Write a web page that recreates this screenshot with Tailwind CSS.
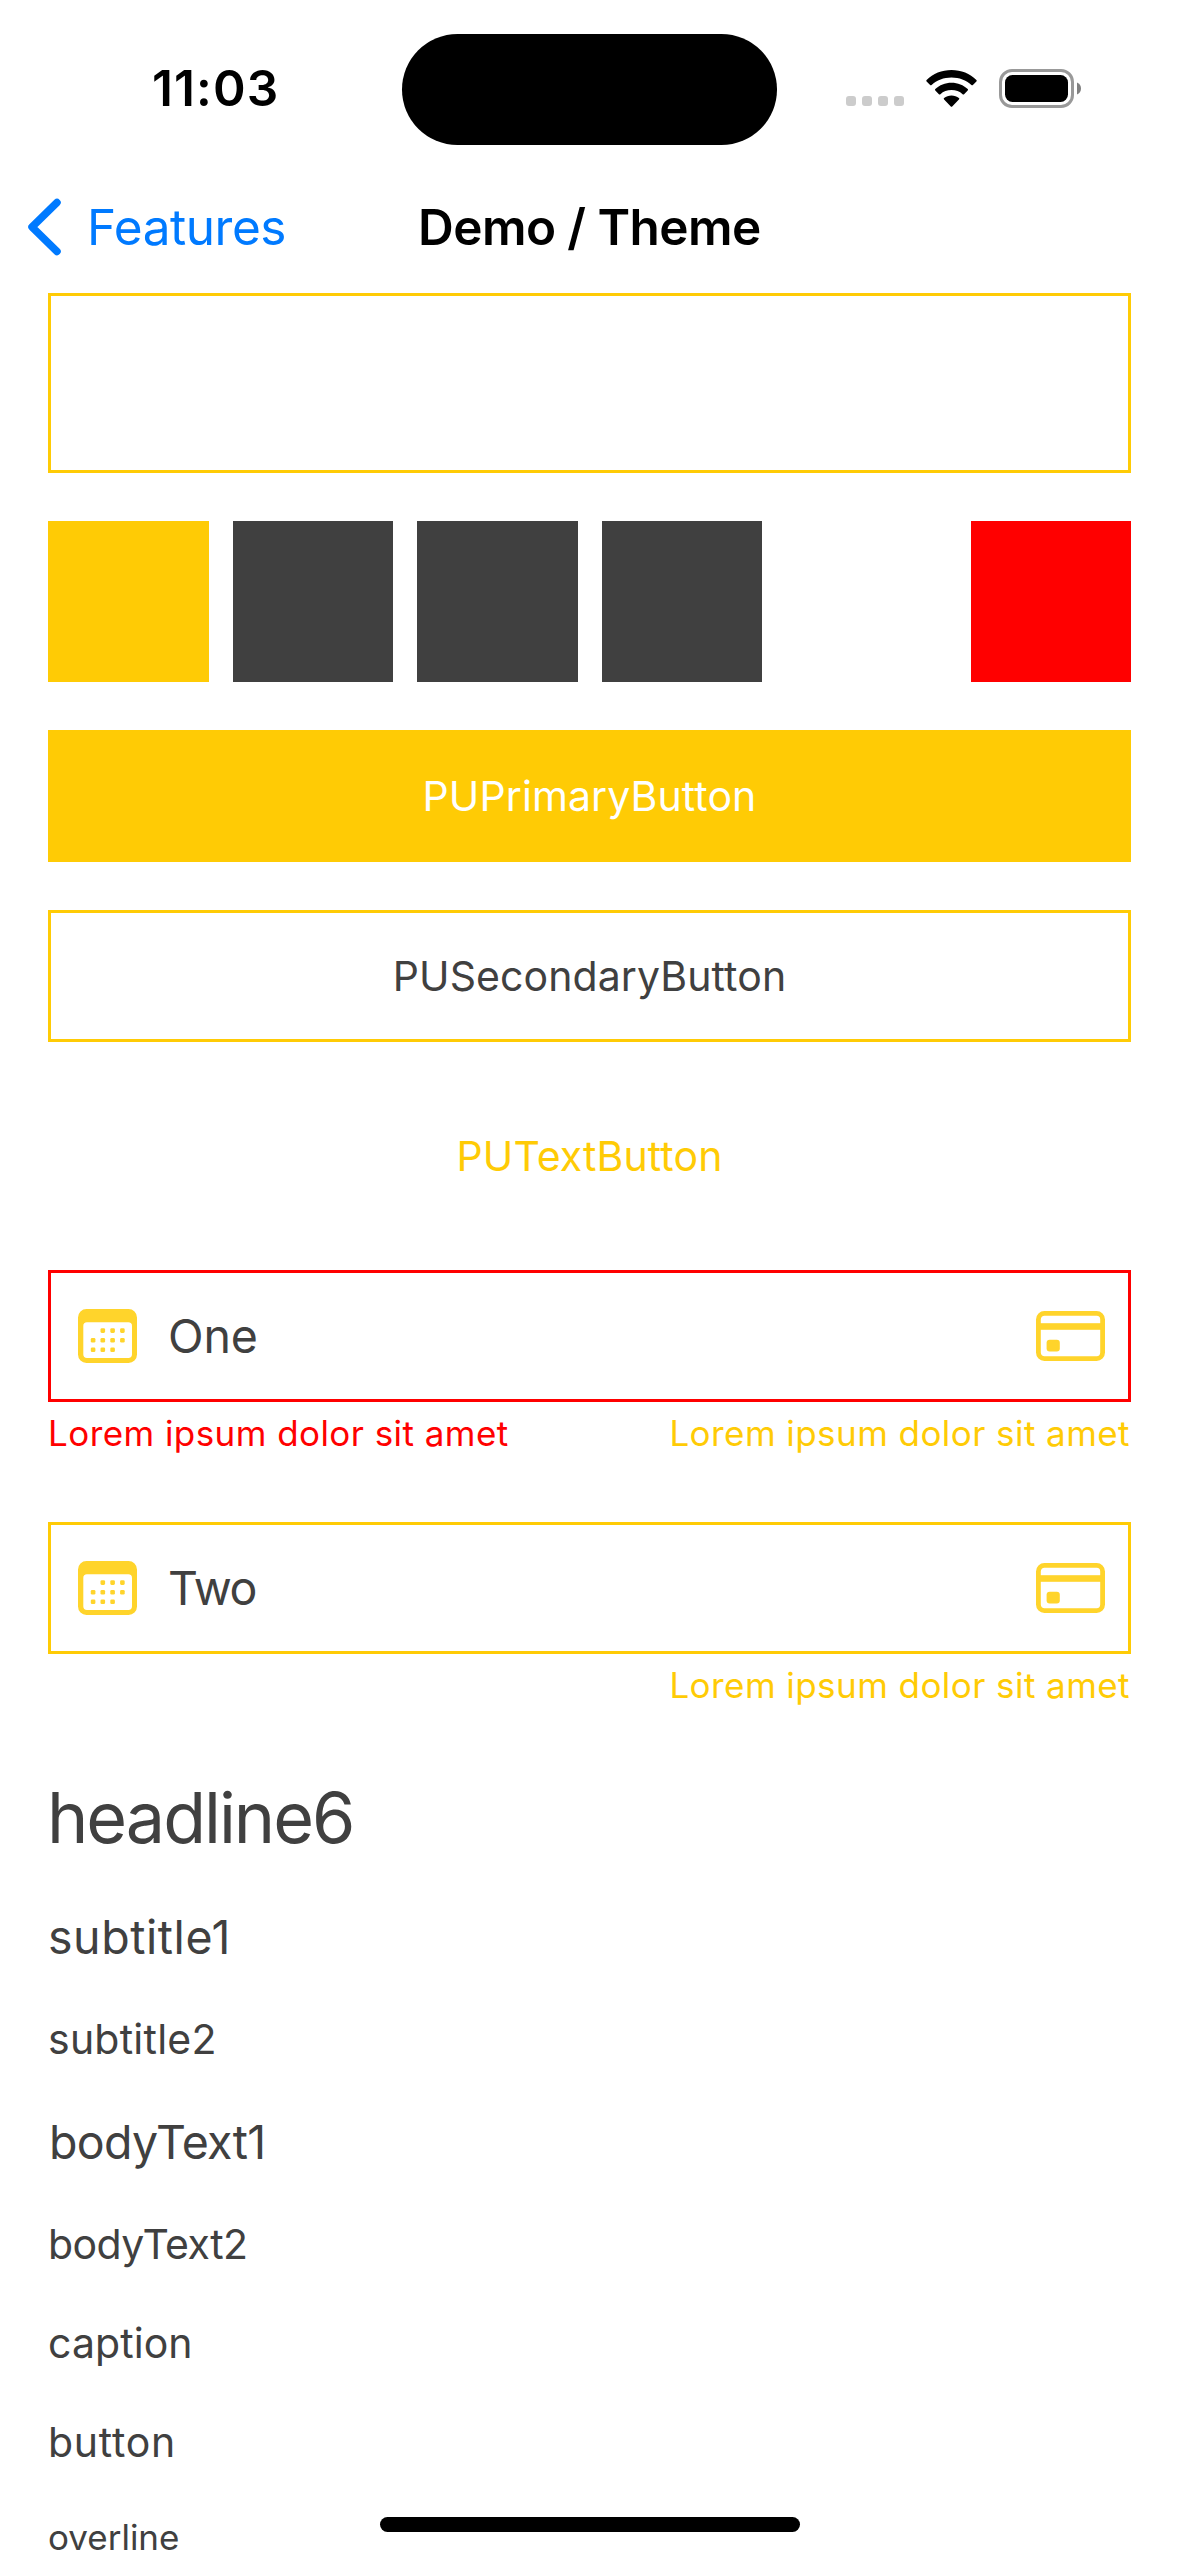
<!DOCTYPE html>
<html lang="en">
<head>
<meta charset="utf-8">
<title>Demo / Theme</title>
<script src="https://cdn.jsdelivr.net/npm/@tailwindcss/browser@4"></script>
</head>
<body class="relative h-[2556px] w-[1179px] overflow-hidden bg-white font-[Inter,sans-serif] text-[#404040]">

  <svg class="hidden">
    <symbol id="calendar" viewBox="0 0 59 54">
      <path fill-rule="evenodd" d="M8.500 0H50.500a8.500 8.500 0 0 1 8.500 8.500V45.500a8.500 8.500 0 0 1 -8.500 8.500H8.500a8.500 8.500 0 0 1 -8.500 -8.500V8.500a8.500 8.500 0 0 1 8.500 -8.500ZM9 13.300a3.700 3.700 0 0 0 -3.700 3.700V45.200a3.700 3.700 0 0 0 3.700 3.700H50.300a3.700 3.700 0 0 0 3.700 -3.700V17a3.700 3.700 0 0 0 -3.700 -3.700Z"/>
      <g>
        <rect x="22.500" y="19.300" width="4.600" height="4.600" rx="1.300"/><rect x="32.300" y="19.300" width="4.600" height="4.600" rx="1.300"/><rect x="42.100" y="19.300" width="4.600" height="4.600" rx="1.300"/>
        <rect x="12.800" y="29" width="4.600" height="4.600" rx="1.300"/><rect x="22.500" y="29" width="4.600" height="4.600" rx="1.300"/><rect x="32.300" y="29" width="4.600" height="4.600" rx="1.300"/><rect x="42.100" y="29" width="4.600" height="4.600" rx="1.300"/>
        <rect x="12.800" y="38.500" width="4.600" height="4.600" rx="1.300"/><rect x="22.500" y="38.500" width="4.600" height="4.600" rx="1.300"/><rect x="32.300" y="38.500" width="4.600" height="4.600" rx="1.300"/>
      </g>
    </symbol>
    <symbol id="card" viewBox="0 0 69 50">
      <rect x="2.400" y="2.400" width="64.200" height="45.200" rx="6" fill="none" stroke="currentColor" stroke-width="4.800"/>
      <rect x="2" y="12.200" width="65" height="6.600"/>
      <rect x="10.600" y="28.700" width="13.200" height="11.800" rx="3"/>
    </symbol>
  </svg>

  <!-- Status bar -->
  <header class="flex h-[176px] items-center">
    <div class="w-[402px] pl-[152px] text-[49.5px] leading-[60px] font-semibold tracking-[1.1px] text-black">11:03</div>
    <div class="mt-[2px] h-[111px] w-[375px] rounded-full bg-black"></div>
    <div class="ml-[69px] flex items-center">
      <div class="mt-[26px] flex gap-[6px]">
        <i class="size-[10px] rounded-[3px] bg-[#cccccc]"></i><i class="size-[10px] rounded-[3px] bg-[#cccccc]"></i><i class="size-[10px] rounded-[3px] bg-[#cccccc]"></i><i class="size-[10px] rounded-[3px] bg-[#cccccc]"></i>
      </div>
      <svg class="ml-[22px] h-[37px] w-[51px]" viewBox="0 0 51 37" fill="#000">
        <path d="M25.500 0C35.200 0 44 3.700 50.400 9.900C50.900 10.400 50.900 11 50.400 11.500L46.900 15C46.500 15.400 45.900 15.400 45.400 15C40.200 10.200 33.200 7.500 25.500 7.500S10.800 10.200 5.600 15C5.100 15.400 4.500 15.400 4.100 15L.6 11.500C.1 11 .1 10.400.6 9.900C7 3.700 15.800 0 25.500 0Z"/>
        <path d="M25.500 12.700C31.800 12.700 37.500 15.100 41.700 19C42.200 19.500 42.200 20.100 41.700 20.600L38.100 24.200C37.700 24.600 37.100 24.600 36.600 24.200C33.700 21.600 29.800 20.100 25.500 20.100S17.300 21.600 14.400 24.200C13.900 24.600 13.300 24.600 12.900 24.200L9.300 20.600C8.800 20.100 8.800 19.500 9.300 19C13.500 15.100 19.200 12.700 25.500 12.700Z"/>
        <path d="M25.500 25.400C28.300 25.400 30.900 26.400 32.900 28.100C33.400 28.500 33.400 29.100 32.900 29.600L26.200 36.400C25.800 36.800 25.200 36.800 24.800 36.400L18.100 29.600C17.600 29.100 17.600 28.500 18.100 28.100C20.100 26.400 22.700 25.400 25.500 25.400Z"/>
      </svg>
      <svg class="ml-[22px] h-[39px] w-[82px]" viewBox="0 0 82 39">
        <rect x="1.500" y="1.500" width="72" height="36" rx="11.500" fill="none" stroke="#999999" stroke-width="3"/>
        <rect x="6" y="6" width="63" height="27" rx="7.500"/>
        <path d="M78 13.500c2.500 1 4 3.300 4 6s-1.500 5-4 6Z" fill="#808080"/>
      </svg>
    </div>
  </header>

  <!-- Navigation bar -->
  <nav class="flex h-[102px] items-center">
    <div class="flex w-[418px] items-center pl-[27px] text-[#007aff]">
      <svg class="h-[58px] w-[35px]" viewBox="0 0 35 58" fill="none" stroke="currentColor" stroke-width="7.500" stroke-linecap="round" stroke-linejoin="round"><path d="M30 4.500L5 29L30 53.500"/></svg>
      <span class="ml-[25px] text-[49.5px] leading-[60px] tracking-[-0.46px]">Features</span>
    </div>
    <h1 class="text-[49.5px] leading-[60px] font-semibold tracking-[-0.57px] whitespace-nowrap text-black">Demo / Theme</h1>
  </nav>

  <main class="flex flex-col gap-12 px-12 pt-[15px]">
    <div class="h-[180px] border-3 border-[#ffcb05]"></div>

    <!-- Theme colours -->
    <div class="grid h-[161px] grid-cols-6 gap-6">
      <div class="bg-[#ffcb05]"></div>
      <div class="bg-[#404040]"></div>
      <div class="bg-[#404040]"></div>
      <div class="bg-[#404040]"></div>
      <div class="bg-white"></div>
      <div class="bg-[#ff0000]"></div>
    </div>

    <button class="h-[132px] bg-[#ffcb05] pt-[2px] text-[41px] tracking-[0.09px] text-white">PUPrimaryButton</button>
    <button class="h-[132px] border-3 border-[#ffcb05] pt-[2px] text-[41px] tracking-[0.09px]">PUSecondaryButton</button>
    <button class="h-[132px] pt-[2px] text-[41px] tracking-[0.09px] text-[#ffcb05]">PUTextButton</button>

    <section>
      <div class="flex h-[132px] items-center border-3 border-[#ff0000] pr-[23px] pl-[27px]">
        <svg class="h-[54px] w-[59px] text-[#ffd42b]" fill="currentColor"><use href="#calendar"/></svg>
        <span class="ml-[31px] flex-1 text-[46.5px] leading-[57px] tracking-[-0.1px]">One</span>
        <svg class="h-[50px] w-[69px] text-[#ffd42b]" fill="currentColor"><use href="#card"/></svg>
      </div>
      <div class="flex h-[72px] justify-between pt-[10px] pr-px text-[35px] leading-[43px] tracking-[0.44px]">
        <span class="text-[#ff0000]">Lorem ipsum dolor sit amet</span>
        <span class="text-[#ffcb05]">Lorem ipsum dolor sit amet</span>
      </div>
    </section>

    <section>
      <div class="flex h-[132px] items-center border-3 border-[#ffcb05] pr-[23px] pl-[27px]">
        <svg class="h-[54px] w-[59px] text-[#ffd42b]" fill="currentColor"><use href="#calendar"/></svg>
        <span class="ml-[31px] flex-1 text-[46.5px] leading-[57px] tracking-[-1.4px]">Two</span>
        <svg class="h-[50px] w-[69px] text-[#ffd42b]" fill="currentColor"><use href="#card"/></svg>
      </div>
      <div class="flex h-[72px] justify-end pt-[10px] pr-px text-[35px] leading-[43px] tracking-[0.44px]">
        <span class="text-[#ffcb05]">Lorem ipsum dolor sit amet</span>
      </div>
    </section>

    <!-- Text styles -->
    <p class="-ml-px pt-px text-[70px] leading-[86px] tracking-[-2.02px]">headline6</p>
    <p class="text-[46.5px] leading-[57px] tracking-[0.56px]">subtitle1</p>
    <p class="-mt-px text-[41px] leading-[52px] tracking-[0.24px]">subtitle2</p>
    <p class="ml-px pt-px text-[46.5px] leading-[57px] tracking-[-0.66px]">bodyText1</p>
    <p class="-mt-px text-[41px] leading-[52px] tracking-[-0.56px]">bodyText2</p>
    <p class="text-[41px] leading-[50px] tracking-[0.07px]">caption</p>
    <p class="pt-px text-[41px] leading-[51px] tracking-[0.73px]">button</p>
    <p class="-mt-px text-[35px] leading-[44px]">overline</p>
  </main>

  <!-- Home indicator -->
  <div class="absolute top-[2517px] left-[380px] h-[15px] w-[420px] rounded-full bg-black"></div>
</body>
</html>
